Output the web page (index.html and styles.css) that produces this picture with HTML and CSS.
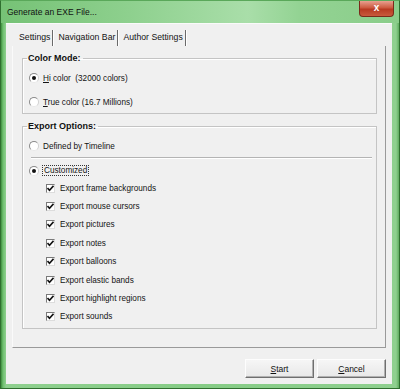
FILE: index.html
```html
<!DOCTYPE html>
<html lang="en">
<head>
  <meta charset="UTF-8">
  <title>Generate an EXE File...</title>
  <link rel="stylesheet" href="styles.css">
</head>
<body>
  <div class="window">
    <div class="titlebar">
      <span class="title">Generate an EXE File...</span>
      <span class="close">x</span>
    </div>

    <div class="client">
      <div class="tabs">
        <span class="tab">Settings</span>
        <span class="tab">Navigation Bar</span>
        <span class="tab">Author Settings</span>
      </div>

      <div class="panel">
        <fieldset class="group color-group">
          <legend>Color Mode:</legend>
          <div class="opt"><span class="radio on"></span><span><u>H</u>i color &nbsp;(32000 colors)</span></div>
          <div class="opt gap"><span class="radio"></span><span><u>T</u>rue color (16.7 Millions)</span></div>
        </fieldset>

        <fieldset class="group export-group">
          <legend>Export Options:</legend>
          <div class="opt"><span class="radio"></span><span>Defined by Timeline</span></div>
          <div class="sep"></div>
          <div class="opt custom"><span class="radio on"></span><span class="focus">Customized</span></div>

          <div class="check"><span class="box"><svg width="7" height="7" viewBox="0 0 7 7"><path d="M0.5 3 L2.5 5.2 L6.5 0.8" fill="none" stroke="#111" stroke-width="1.6"/></svg></span><span>Export frame backgrounds</span></div>
          <div class="check"><span class="box"><svg width="7" height="7" viewBox="0 0 7 7"><path d="M0.5 3 L2.5 5.2 L6.5 0.8" fill="none" stroke="#111" stroke-width="1.6"/></svg></span><span>Export mouse cursors</span></div>
          <div class="check"><span class="box"><svg width="7" height="7" viewBox="0 0 7 7"><path d="M0.5 3 L2.5 5.2 L6.5 0.8" fill="none" stroke="#111" stroke-width="1.6"/></svg></span><span>Export pictures</span></div>
          <div class="check"><span class="box"><svg width="7" height="7" viewBox="0 0 7 7"><path d="M0.5 3 L2.5 5.2 L6.5 0.8" fill="none" stroke="#111" stroke-width="1.6"/></svg></span><span>Export notes</span></div>
          <div class="check"><span class="box"><svg width="7" height="7" viewBox="0 0 7 7"><path d="M0.5 3 L2.5 5.2 L6.5 0.8" fill="none" stroke="#111" stroke-width="1.6"/></svg></span><span>Export balloons</span></div>
          <div class="check"><span class="box"><svg width="7" height="7" viewBox="0 0 7 7"><path d="M0.5 3 L2.5 5.2 L6.5 0.8" fill="none" stroke="#111" stroke-width="1.6"/></svg></span><span>Export elastic bands</span></div>
          <div class="check"><span class="box"><svg width="7" height="7" viewBox="0 0 7 7"><path d="M0.5 3 L2.5 5.2 L6.5 0.8" fill="none" stroke="#111" stroke-width="1.6"/></svg></span><span>Export highlight regions</span></div>
          <div class="check"><span class="box"><svg width="7" height="7" viewBox="0 0 7 7"><path d="M0.5 3 L2.5 5.2 L6.5 0.8" fill="none" stroke="#111" stroke-width="1.6"/></svg></span><span>Export sounds</span></div>
        </fieldset>
      </div>

      <div class="buttons">
        <button type="button"><u>S</u>tart</button>
        <button type="button"><u>C</u>ancel</button>
      </div>
    </div>
  </div>
</body>
</html>
```

FILE: styles.css
```css
body {
  margin: 0;
  font-family: 'Liberation Sans', Arial, sans-serif;
  font-size: 8.2px;
  color: #141414;
  background: #fff;
}

.window {
  width: 400px;
  height: 389px;
  box-sizing: border-box;
  display: flex;
  flex-direction: column;
  background: linear-gradient(90deg, #3f8f3f 0, #6fbf6f 2px, #8fd08f 5px, #86cc86 50%, #8fd08f 395px, #4f9f4f 399px);
  border: 1px solid #2f6f2f;
  border-top-color: #5aa85a;
}

.titlebar {
  height: 22px;
  flex: none;
  display: flex;
  align-items: flex-start;
  background: linear-gradient(90deg, #76c276 0, #8ccf8c 30%, #a9dea9 62%, #93d393 75%, #8acd8a 100%);
}

.title {
  padding-left: 6px;
  line-height: 23px;
  font-size: 8.5px;
  color: #111;
}

.close {
  margin-left: auto;
  margin-right: 5px;
  width: 35px;
  height: 16px;
  box-sizing: border-box;
  border: 1px solid #7a2a1a;
  border-top: none;
  border-radius: 0 0 4px 4px;
  background: linear-gradient(#e8a090, #cc5a40 45%, #b83a22 55%, #c85a3c);
  color: #fff;
  font-weight: bold;
  font-size: 10px;
  text-align: center;
  line-height: 13px;
}

.client {
  flex: none;
  height: 361px;
  margin: 0 7px 0 5px;
  display: flex;
  flex-direction: column;
  background: #f0f0f0;
  border-top: 1px solid #fafafa;
  box-sizing: border-box;
}

.tabs {
  height: 22px;
  flex: none;
  display: flex;
  align-items: flex-end;
  padding-left: 9px;
}

.tab {
  height: 16px;
  line-height: 14px;
  padding: 0 2px 0 4px;
  font-size: 8.7px;
  border-right: 1px solid #6a6a6a;
  box-shadow: 1px 0 0 #fff;
  margin-right: 1px;
}

.panel {
  flex: none;
  height: 302px;
  margin: 0 6px;
  box-sizing: border-box;
  padding: 6px 8px 0 9px;
  border-left: 1px solid #fafafa;
  border-right: 1px solid #9a9a9a;
  border-bottom: 1px solid #9a9a9a;
}

.group {
  margin: 0;
  padding: 5px 0 2px 6px;
  border: 1px solid #c4c4c4;
  box-shadow: inset 1px 1px 0 #fff;
}

.group legend {
  padding: 0 2px 0 1px;
  margin-left: -2px;
  font-size: 9px;
  font-weight: bold;
  line-height: 12px;
  color: #111;
}

.export-group {
  margin-top: 6px;
}

.opt {
  height: 18px;
  display: flex;
  align-items: center;
  gap: 4px;
}

.opt.gap {
  margin-top: 6px;
}

.opt.custom {
  height: 17px;
  margin-top: 3px;
}

.radio {
  width: 10px;
  height: 10px;
  box-sizing: border-box;
  border-radius: 50%;
  border: 1px solid;
  border-color: #8a8a8a #d0d0d0 #e8e8e8 #8a8a8a;
  background: #fff;
  display: flex;
  align-items: center;
  justify-content: center;
}

.radio.on::after {
  content: "";
  width: 4px;
  height: 4px;
  border-radius: 50%;
  background: #111;
}

.focus {
  outline: 1px dotted #333;
  padding: 0 1px;
}

.sep {
  height: 1px;
  margin: 2px 4px 0 2px;
  background: #b4b4b4;
  border-bottom: 1px solid #fff;
}

.check {
  height: 18.4px;
  display: flex;
  align-items: center;
  gap: 5px;
  padding-left: 17px;
}

.box {
  width: 9px;
  height: 9px;
  box-sizing: border-box;
  border: 1px solid;
  border-color: #7a7a7a #dcdcdc #dcdcdc #7a7a7a;
  background: #fff;
  display: flex;
  align-items: center;
  justify-content: center;
}

.buttons {
  display: flex;
  justify-content: flex-end;
  gap: 3px;
  padding: 11px 6px 0 0;
}

button {
  width: 69px;
  height: 19px;
  padding: 0;
  font-family: inherit;
  font-size: 8.5px;
  color: #111;
  background: linear-gradient(#f6f6f6, #e8e8e8);
  border: 1px solid;
  border-color: #fdfdfd #6f6f6f #6f6f6f #fdfdfd;
  box-shadow: inset -1px -1px 0 #b0b0b0;
}
```
